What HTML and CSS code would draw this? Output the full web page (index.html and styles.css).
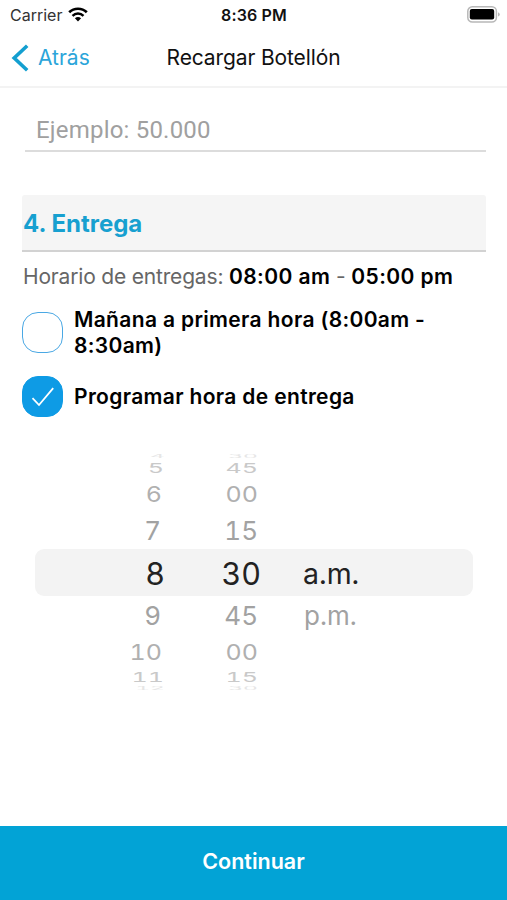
FILE: index.html
```html
<!DOCTYPE html>
<html lang="es">
<head>
    <meta charset="UTF-8" />
    <meta name="viewport" content="width=device-width, initial-scale=1.0"/>
    <title>Recargar Botellón</title>
    <link rel="stylesheet" href="styles.css">
</head>
<body>
    <div class="status-bar">
        <div class="carrier">
            <span>Carrier</span>
            <svg class="wifi-icon" width="20" height="15" viewBox="0 0 20 15">
                <path d="M1.2 5.3a12.7 12.7 0 0 1 17.6 0" fill="none" stroke="#000" stroke-width="2.7"/>
                <path d="M4.5 8.8a8 8 0 0 1 11 0" fill="none" stroke="#000" stroke-width="2.5"/>
                <path d="M10 14.6L6.9 11.3a4.6 4.6 0 0 1 6.2 0z"/>
            </svg>
        </div>
        <div class="clock">8:36 PM</div>
        <svg class="battery-icon" width="33" height="17" viewBox="0 0 33 17">
            <rect x="0.8" y="0.8" width="28.6" height="15.2" rx="4.5" fill="#fff" stroke="#b8b8b8" stroke-width="1.5"/>
            <rect x="2.8" y="3" width="24.4" height="10.6" rx="2"/>
            <path d="M31 6.2q1.8.8 1.8 2.2t-1.8 2.2z" fill="#b8b8b8"/>
        </svg>
    </div>

    <header class="nav-bar">
        <a href="#" class="back-link">
            <svg width="18" height="28" viewBox="0 0 18 28">
                <path d="M16.2 1.8L3.2 14l13 12.2" fill="none" stroke="#139fd0" stroke-width="3.6"/>
            </svg>
            <span>Atrás</span>
        </a>
        <h1>Recargar Botellón</h1>
    </header>

    <main class="content">
        <input class="amount-input" type="text" placeholder="Ejemplo: 50.000" />

        <h2 class="section-title"><span>4. Entrega</span></h2>
        <p class="schedule">Horario de entregas: <b>08:00 am</b> - <b>05:00 pm</b></p>

        <div class="option">
            <span class="checkbox"></span>
            <span class="option-label">Mañana a primera hora (8:00am -<br>8:30am)</span>
        </div>
        <div class="option">
            <span class="checkbox checked">
                <svg width="24" height="20" viewBox="0 0 24 20">
                    <path d="M1.5 11.2L8 18 22.2 1.2" fill="none" stroke="#fff" stroke-width="1.8"/>
                </svg>
            </span>
            <span class="option-label">Programar hora de entrega</span>
        </div>

        <div class="picker">
            <div class="row edge"><span>4</span><span>30</span></div>
            <div class="row far"><span>5</span><span>45</span></div>
            <div class="row mid"><span>6</span><span>00</span></div>
            <div class="row near"><span>7</span><span>15</span></div>
            <div class="row selected"><span>8</span><span>30</span><span>a.m.</span></div>
            <div class="row near"><span>9</span><span>45</span><span>p.m.</span></div>
            <div class="row mid"><span>10</span><span>00</span></div>
            <div class="row far"><span>11</span><span>15</span></div>
            <div class="row edge"><span>12</span><span>30</span></div>
        </div>
    </main>

    <button class="continue-btn">Continuar</button>
</body>
</html>
```

FILE: styles.css
```css
/* General Reset */
* {
    box-sizing: border-box;
    margin: 0;
    padding: 0;
}

body {
    height: 900px;
    display: flex;
    flex-direction: column;
    background-color: #fff;
    color: #111;
    font-family: Inter, 'Liberation Sans', sans-serif;
    overflow: hidden;
}

/* Status Bar */
.status-bar {
    height: 30px;
    display: grid;
    grid-template-columns: 1fr auto 1fr;
    align-items: center;
    padding: 0 9px 0 10px;
    font-size: 16px;
}

.carrier {
    display: flex;
    align-items: center;
    gap: 6px;
    color: #333;
}

.wifi-icon {
    margin-top: -2px;
}

.clock {
    font-weight: 600;
    letter-spacing: 0.15px;
}

.battery-icon {
    justify-self: end;
    margin: -2px -2px 0 0;
}

/* Navigation */
.nav-bar {
    height: 58px;
    display: grid;
    grid-template-columns: 1fr auto 1fr;
    align-items: center;
    padding: 0 11px 1px 11px;
    border-bottom: 2px solid #f3f3f3;
}

.back-link {
    display: flex;
    align-items: center;
    gap: 9px;
    color: #2ba5da;
    font-size: 21px;
    text-decoration: none;
}

.nav-bar h1 {
    font-size: 21px;
    font-weight: 400;
    letter-spacing: -0.12px;
}

/* Form */
.content {
    flex: 1;
    padding: 19px 21px 0 22px;
}

.amount-input {
    display: block;
    width: 461px;
    height: 45px;
    margin-left: 3px;
    padding: 2px 11px 0 11px;
    border: none;
    border-bottom: 2px solid #dcdcdc;
    outline: none;
    font-family: Roboto, sans-serif;
    font-size: 24px;
    letter-spacing: 0.2px;
}

.amount-input::placeholder {
    color: #a0a0a0;
}

.section-title {
    height: 57px;
    margin-top: 43px;
    padding: 2px 0 0 1px;
    display: flex;
    align-items: center;
    background-color: #f5f5f5;
    border-bottom: 2px solid #d2d2d2;
    border-radius: 3px 3px 0 0;
    color: #17a0d0;
    font-size: 24px;
    font-weight: 700;
}

.schedule {
    margin-top: 11px;
    padding-left: 1px;
    line-height: 28px;
    font-size: 21px;
    letter-spacing: -0.18px;
    color: #666;
    white-space: nowrap;
}

.schedule b {
    font-weight: 600;
    letter-spacing: 0.42px;
    color: #000;
}

.option {
    display: flex;
    align-items: center;
    gap: 11px;
    height: 51px;
    margin-top: 16px;
}

.option + .option {
    margin-top: 13px;
}

.checkbox {
    width: 41px;
    height: 41px;
    display: flex;
    align-items: center;
    justify-content: center;
    border: 1.5px solid #4aa8e4;
    border-radius: 16px;
}

.checkbox.checked {
    background-color: #0e9be5;
    border-color: #0e9be5;
}

.option-label {
    color: #000;
    font-size: 21px;
    font-weight: 600;
    letter-spacing: 0.34px;
    line-height: 25.5px;
    white-space: nowrap;
}

/* Time Picker */
.picker {
    width: 438px;
    margin: 31px 0 0 13px;
}

.row {
    display: grid;
    grid-template-columns: 126px 97px 1fr;
    color: #a2a2a2;
    font-size: 26px;
    font-variant-numeric: tabular-nums;
}

.row span {
    text-align: right;
}

.row span:nth-child(3) {
    text-align: left;
    padding-left: 46px;
}

.row.selected {
    grid-template-columns: 130px 96px 1fr;
    height: 47px;
    line-height: 49px;
    border-radius: 9px;
    background-color: #f3f3f3;
    color: #222;
    font-size: 30.5px;
}

.row.selected span:nth-child(3) {
    padding-left: 42px;
    font-size: 28.5px;
}

.row.near {
    height: 38px;
    line-height: 39px;
}

.row.mid {
    grid-template-columns: 127px 96px 1fr;
    height: 35px;
    line-height: 37px;
    color: #b0b0b0;
    font-size: 25px;
}

.row.mid span {
    transform: scaleY(0.85);
}

.row.far {
    grid-template-columns: 129px 94px 1fr;
    height: 16px;
    line-height: 16px;
    color: #c9c9c9;
    font-size: 25px;
}

.row.far span {
    transform: scaleY(0.55);
}

.row.edge {
    grid-template-columns: 130px 93px 1fr;
    height: 7px;
    line-height: 7px;
    color: #e6e6e6;
    font-size: 23px;
}

.row.edge span {
    transform: scaleY(0.18);
}

/* Footer Button */
.continue-btn {
    height: 74px;
    padding-bottom: 4px;
    border: none;
    background-color: #02a3d6;
    color: #fff;
    font-family: inherit;
    font-size: 21.5px;
    font-weight: 600;
}
```
